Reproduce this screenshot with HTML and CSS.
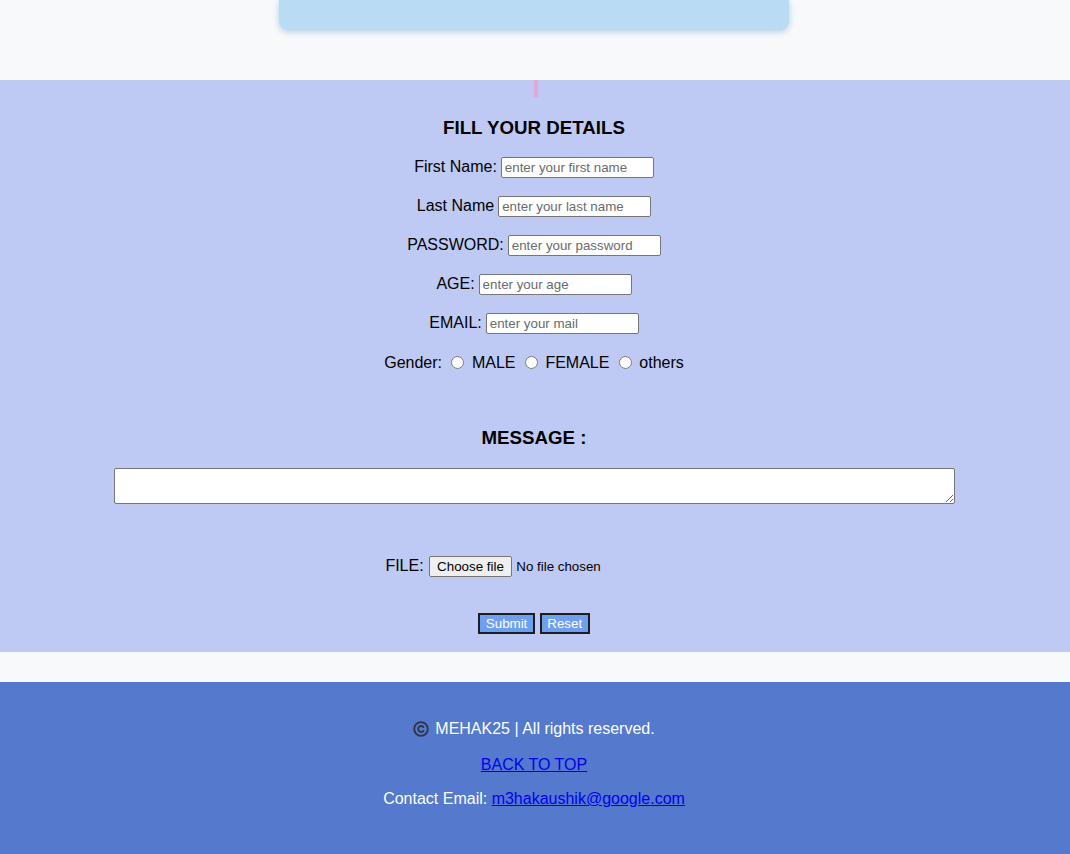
FILE: index.html
```html
<!DOCTYPE html>
<html lang="en">
<head>
<meta charset="utf-8">
<title>Fill your details</title>
<link rel="stylesheet" href="styles.css">
</head>
<body>
<div class="top">
  <div class="card"></div>
</div>

<section class="form-section" id="form">
  <div class="pink-bar"></div>
  <form class="details">
    <h2 class="title">FILL YOUR DETAILS</h2>
    <div class="row"><label for="fn">First Name:</label><input class="field" id="fn" type="text" placeholder="enter your first name"></div>
    <div class="row"><label for="ln">Last Name</label><input class="field" id="ln" type="text" placeholder="enter your last name"></div>
    <div class="row"><label for="pw">PASSWORD:</label><input class="field" id="pw" type="password" placeholder="enter your password"></div>
    <div class="row"><label for="age">AGE:</label><input class="field" id="age" type="text" placeholder="enter your age"></div>
    <div class="row"><label for="em">EMAIL:</label><input class="field" id="em" type="email" placeholder="enter your mail"></div>
    <div class="gender">Gender: <input type="radio" name="g" id="m"> <label for="m">MALE</label> <input type="radio" name="g" id="f"> <label for="f">FEMALE</label> <input type="radio" name="g" id="o"> <label for="o">others</label></div>

    <h2 class="msg-title">MESSAGE :</h2>
    <textarea class="message"></textarea>

    <div class="file-row">
      <span class="file-label">FILE:</span>
      <div class="file-picker">
        <input id="file" class="file-input" type="file">
        <label class="file-btn" for="file">Choose file</label>
        <span class="file-status">No file chosen</span>
      </div>
    </div>

    <div class="actions">
      <input class="btn" type="submit" value="Submit">
      <input class="btn" type="reset" value="Reset">
    </div>
  </form>
</section>

<div class="spacer"></div>

<footer class="footer">
  <p class="copy"><svg class="copy-icon" width="16" height="16" viewBox="0 0 16 16" aria-hidden="true"><circle cx="8" cy="8" r="6.8" fill="none" stroke="#2f3340" stroke-width="1.8"/><path d="M10.5 6.1 A3 3 0 1 0 10.5 9.9" fill="none" stroke="#2f3340" stroke-width="1.8" stroke-linecap="round"/></svg> MEHAK25 | All rights reserved.</p>
  <p class="back"><a href="#">BACK TO TOP</a></p>
  <p class="contact">Contact Email: <a href="#">m3hakaushik@google.com</a></p>
</footer>
</body>
</html>
```

FILE: styles.css
```css
html, body {
  margin: 0;
  padding: 0;
}
body {
  background: #f8f9fb;
  font-family: "Liberation Sans", Arial, sans-serif;
  color: #000;
  font-size: 16px;
}

.top {
  height: 80px;
  padding-right: 2px;
}
.card {
  width: 510px;
  height: 30px;
  margin: 0 auto;
  background: #b9dbf4;
  border-radius: 0 0 9px 9px;
  box-shadow: 0 2px 6px rgba(120, 170, 220, 0.55);
}

.form-section {
  background: #bfcaf4;
  height: 572px;
  padding-right: 2px;
}
.pink-bar {
  width: 4px;
  height: 17px;
  margin-left: 50%;
  background: #e2a9d8;
}

.details {
  text-align: center;
}
.title {
  margin: 20px 0 18px;
  font-size: 18.72px;
  line-height: 22px;
  font-weight: bold;
}
.row {
  display: flex;
  justify-content: center;
  align-items: center;
  gap: 4px;
  height: 21px;
  margin-bottom: 18px;
  line-height: 21px;
}
.row label {
  position: relative;
  top: -1px;
}
.field {
  width: 153px;
  height: 21px;
  box-sizing: border-box;
  border: 1px solid #767676;
  border-radius: 2px;
  padding: 1px 3px;
  font-family: "Liberation Sans", Arial, sans-serif;
  font-size: 13.33px;
  background: #fff;
  margin: 0;
}
.field::placeholder {
  color: #6b6b6b;
}
.gender {
  height: 20px;
  line-height: 20px;
  padding-top: 1px;
}
.gender input {
  width: 13px;
  height: 13px;
  margin: 3px 3px 0 5px;
  vertical-align: -1px;
}

.msg-title {
  margin: 54px 0 19px;
  font-size: 18.72px;
  line-height: 22px;
  font-weight: bold;
}
.message {
  display: block;
  width: 841px;
  height: 36px;
  box-sizing: border-box;
  margin: 0 auto;
  border: 1px solid #767676;
  border-radius: 2px;
  background: #fff;
}

.file-row {
  display: flex;
  justify-content: center;
  align-items: center;
  gap: 5px;
  height: 21px;
  margin-top: 52px;
}
.file-label {
  position: relative;
  top: -1px;
}
.file-picker {
  width: 254px;
  display: flex;
  align-items: center;
  gap: 4px;
  text-align: left;
}
.file-input {
  display: none;
}
.file-btn {
  display: block;
  height: 21px;
  box-sizing: border-box;
  padding: 1px 7.5px;
  background: #efefef;
  border: 1px solid #767676;
  border-radius: 2px;
  color: #000;
  font-size: 13.33px;
  line-height: 17px;
  cursor: default;
}
.file-status {
  font-size: 13.33px;
  line-height: 17px;
}

.actions {
  display: flex;
  justify-content: center;
  gap: 5px;
  margin-top: 36px;
}
.btn {
  height: 21px;
  box-sizing: border-box;
  padding: 1px 5.5px;
  margin: 0;
  background: #6f9ff0;
  border: 2px solid #1e1e1e;
  color: #fff;
  font-family: "Liberation Sans", Arial, sans-serif;
  font-size: 13.33px;
  line-height: 15px;
}

.spacer {
  height: 30px;
}

.footer {
  background: #5479cd;
  height: 200px;
  box-sizing: border-box;
  padding: 38px 2px 0 0;
  text-align: center;
  color: #fff;
}
.footer p {
  margin: 0;
  line-height: 18px;
}
.copy {
  display: flex;
  justify-content: center;
  align-items: center;
  gap: 6px;
}
.copy-icon {
  display: block;
}
.back {
  margin-top: 18px !important;
}
.contact {
  margin-top: 16px !important;
}
.footer a {
  color: #0000ee;
  text-decoration: underline;
}
```
